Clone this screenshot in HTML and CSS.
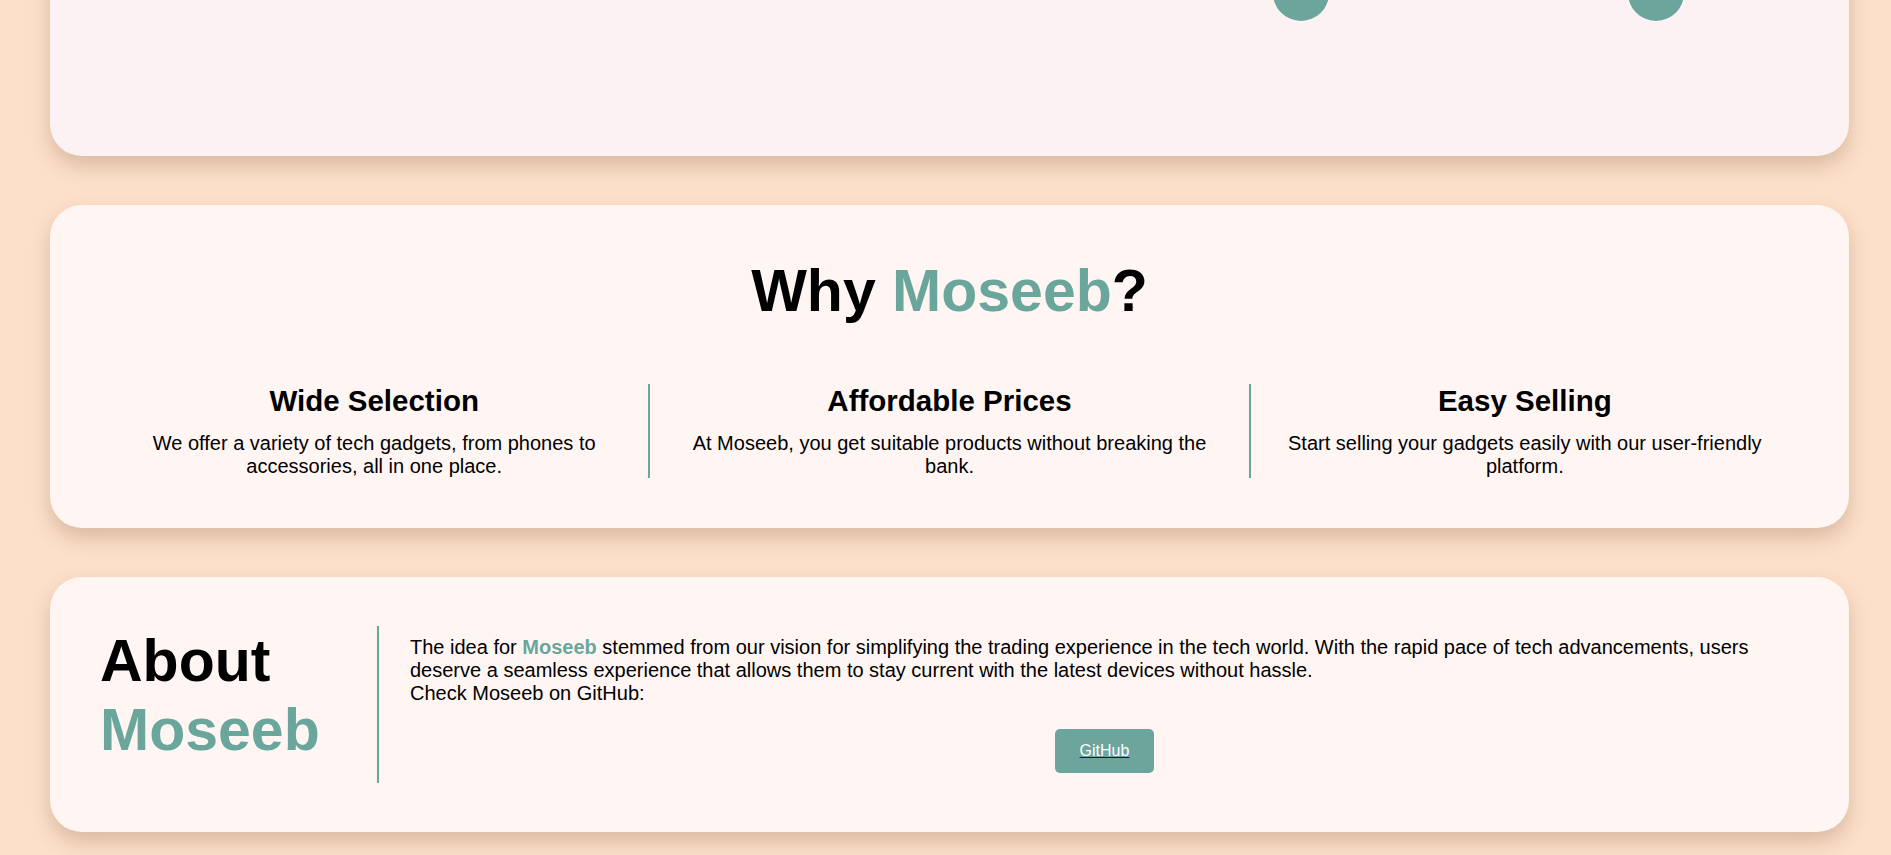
FILE: index.html
```html
<!DOCTYPE html>
<html lang="en">
<head>
<meta charset="utf-8">
<title>Moseeb</title>
<link rel="stylesheet" href="styles.css">
</head>
<body>
<main class="page">
  <section class="card card-top">
    <div class="dots">
      <span class="dot"></span>
      <span class="dot"></span>
    </div>
  </section>

  <section class="card card-why">
    <h2 class="title">Why <span class="accent">Moseeb</span>?</h2>
    <div class="features">
      <div class="feature">
        <h3>Wide Selection</h3>
        <p>We offer a variety of tech gadgets, from phones to accessories, all in one place.</p>
      </div>
      <div class="feature feature-mid">
        <h3>Affordable Prices</h3>
        <p>At Moseeb, you get suitable products without breaking the bank.</p>
      </div>
      <div class="feature">
        <h3>Easy Selling</h3>
        <p>Start selling your gadgets easily with our user-friendly platform.</p>
      </div>
    </div>
  </section>

  <section class="card card-about">
    <div class="about-row">
      <h2 class="about-title">About <span class="accent">Moseeb</span></h2>
      <div class="divider"></div>
      <div class="about-body">
        <p>The idea for <strong class="accent">Moseeb</strong> stemmed from our vision for simplifying the trading experience in the tech world. With the rapid pace of tech advancements, users deserve a seamless experience that allows them to stay current with the latest devices without hassle.<br>Check Moseeb on GitHub:</p>
        <div class="btn-row">
          <a class="btn" href="#">GitHub</a>
        </div>
      </div>
    </div>
  </section>
</main>
</body>
</html>
```

FILE: styles.css
```css
* { box-sizing: border-box; }

html, body {
  margin: 0;
  padding: 0;
}

body {
  background: #fde0ca;
  font-family: "Liberation Sans", Arial, sans-serif;
  color: #000;
  overflow: hidden;
}

.page {
  padding: 0 42px 0 50px;
}

.card {
  background: #fff6f4;
  border-radius: 32px;
  box-shadow: 0 10px 20px rgba(90, 50, 20, 0.22);
  margin-bottom: 49px;
}

.accent { color: #6ba69c; }

/* first (cut-off) card */
.card-top {
  background: #fcf2f3;
  margin-top: -60px;
  padding: 25px 165px 135px 50px;
}

.dots {
  display: flex;
  justify-content: flex-end;
  gap: 299px;
}

.dot {
  width: 56px;
  height: 56px;
  border-radius: 50%;
  background: #6ba59c;
}

/* why card */
.card-why {
  padding: 46px 50px 50px;
}

.title {
  margin: 6px 0 58px;
  text-align: center;
  font-size: 59px;
  line-height: 69px;
  font-weight: 700;
}

.features {
  display: flex;
}

.feature {
  flex: 1 1 0;
  text-align: center;
}

.feature-mid {
  border-left: 2px solid #6ba59c;
  border-right: 2px solid #6ba59c;
  padding: 0 25px;
}

.feature h3 {
  margin: 0 0 14px;
  font-size: 29.5px;
  font-weight: 700;
}

.feature p {
  margin: 0;
  font-size: 20px;
}

/* about card */
.card-about {
  padding: 46px 50px;
}

.about-row {
  display: flex;
  align-items: center;
}

.about-title {
  align-self: flex-start;
  width: 277px;
  flex: 0 0 277px;
  margin: 4px 0 21px;
  font-size: 59px;
  line-height: 69px;
  font-weight: 700;
}

.divider {
  align-self: stretch;
  width: 2px;
  flex: 0 0 2px;
  margin: 3px 0;
  background: #6ba59c;
}

.about-body {
  flex: 1;
  padding-left: 31px;
}

.about-body p {
  margin: 0;
  font-size: 20px;
}

.btn-row {
  display: flex;
  justify-content: center;
  margin-top: 24px;
}

.btn {
  display: block;
  background: #6ba59c;
  color: #fff;
  text-decoration: underline;
  text-decoration-color: #0000ee;
  font-size: 16px;
  line-height: 18px;
  padding: 13px 25px;
  border-radius: 5px;
}
```
